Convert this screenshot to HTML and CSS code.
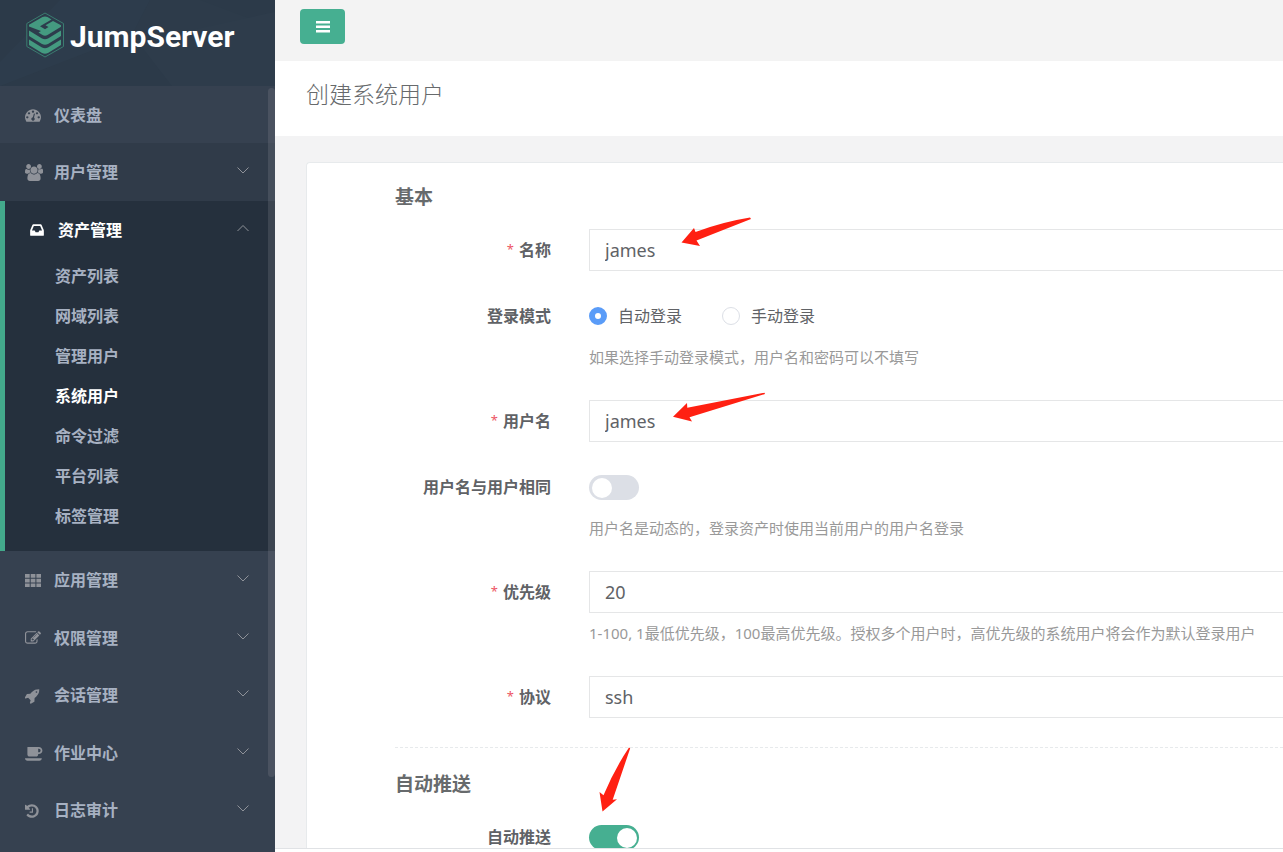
FILE: index.html
```html
<!DOCTYPE html>
<html lang="zh-CN">
<head>
<meta charset="utf-8">
<title>创建系统用户 - JumpServer</title>
<link rel="stylesheet" href="styles.css">
</head>
<body>
<div class="app">
  <aside class="sidebar">
    <a class="brand" href="#">
      <svg class="brand-pattern" viewBox="0 0 275 86" preserveAspectRatio="none" aria-hidden="true">
        <path d="M0 62L60 0H150L132 35L0 86Z" fill="#2f3f4f"/>
        <path d="M132 35L175 86H275V28L200 0H150Z" fill="#2e3d4c"/>
        <path d="M138 42L275 12V86H172Z" fill="#303f4e"/>
      </svg>
      <svg class="brand-mark" viewBox="0 0 38 46" aria-hidden="true">
        <path d="M19 1L37.500 11.500V34.500L19 45L.800 34.500V11.500Z" fill="none" stroke="#3b7c70" stroke-width="1"/>
        <g fill="#449a80">
          <path d="M3 12.800L16.500 5Q19 3.800 21.500 5L25.500 7.500L14 14.200L19 17.200L22.500 15L19.500 13.200L27 9L35 13.200V14.800L21.500 23Q19 24.300 16.500 23L12.500 20.500L15 19L3 14.500Z"/>
          <path d="M3 18.500L16 26.500Q19 28 22 26.500L35 18.500V24L22 32Q19 33.500 16 32L3 24Z"/>
          <path d="M3 27.500L16 35.500Q19 37 22 35.500L35 27.500V33L22 41Q19 42.500 16 41L3 33Z"/>
        </g>
      </svg>
      <span class="brand-name">JumpServer</span>
    </a>
    <nav class="nav">
      <ul class="menu">
        <li class="item"><a class="link" href="#">
          <svg class="icon" viewBox="0 0 1792 1792"><path d="M384 1152q0-53-37.500-90.500t-90.500-37.500-90.500 37.500-37.500 90.500 37.500 90.500 90.500 37.500 90.500-37.500 37.500-90.500zm192-448q0-53-37.500-90.500t-90.500-37.500-90.500 37.500-37.500 90.500 37.500 90.500 90.500 37.500 90.500-37.500 37.500-90.500zm428 481l101-382q6-26-7.500-48.500t-38.500-29.500-48 6.500-30 39.500l-101 382q-60 5-107 43.500t-63 98.500q-20 77 20 146t117 89 146-20 89-117q16-60-6-117t-72-91zm660-33q0-53-37.500-90.500t-90.500-37.500-90.500 37.500-37.500 90.500 37.500 90.500 90.500 37.500 90.500-37.500 37.500-90.500zm-640-640q0-53-37.500-90.500t-90.500-37.500-90.500 37.500-37.500 90.500 37.500 90.500 90.500 37.500 90.500-37.500 37.500-90.500zm448 192q0-53-37.500-90.500t-90.500-37.500-90.500 37.500-37.500 90.500 37.500 90.500 90.500 37.500 90.500-37.500 37.500-90.500zm320 448q0 261-141 483-19 29-54 29h-1402q-35 0-54-29-141-221-141-483 0-182 71-348t191-286 286-191 348-71 348 71 286 191 191 286 71 348z"/></svg>
          <span class="text">仪表盘</span></a></li>
        <li class="item shaded"><a class="link" href="#">
          <svg class="icon wide" viewBox="-64 0 1920 1792"><path d="M529 896q-162 5-265 128h-134q-82 0-138-40.500t-56-118.500q0-353 124-353 6 0 43.500 21t97.500 42.500 119 21.500q67 0 133-23-5 37-5 66 0 159 93 293zm1071 637q0 120-73 189.500t-194 69.500h-874q-121 0-194-69.500t-73-189.500q0-53 3.500-103.500t14-109 26.500-108.500 43-97.500 62-81 85.500-53.500 111.500-20q10 0 43 21.500t73 48 107 48 135 21.500 135-21.500 107-48 73-48 43-21.500q61 0 111.500 20t85.500 53.500 62 81 43 97.500 26.500 108.500 14 109 3.500 103.500zm-1024-1277q0 106-75 181t-181 75-181-75-75-181 75-181 181-75 181 75 75 181zm704 384q0 159-112.500 271.500t-271.500 112.500-271.500-112.500-112.500-271.500 112.500-271.500 271.500-112.500 271.500 112.500 112.500 271.500zm576 225q0 78-56 118.500t-138 40.500h-134q-103-123-265-128 93-134 93-293 0-29-5-66 66 23 133 23 59 0 119-21.500t97.500-42.500 43.500-21q124 0 124 353zm-128-609q0 106-75 181t-181 75-181-75-75-181 75-181 181-75 181 75 75 181z"/></svg>
          <span class="text">用户管理</span>
          <svg class="chevron" viewBox="0 0 12 7"><path d="M.500.500L6 6L11.500.500"/></svg></a></li>
        <li class="item open"><a class="link" href="#">
          <svg class="icon" viewBox="0 0 1536 1792"><path d="M1023 960h316q-1-3-2.500-8t-2.500-8l-212-496h-708l-212 496q-1 3-2.500 8t-2.500 8h316l95 192h320zm513 30v482q0 26-19 45t-45 19h-1408q-26 0-45-19t-19-45v-482q0-62 25-123l238-552q10-25 36.500-42t52.500-17h832q26 0 52.500 17t36.500 42l238 552q25 61 25 123z"/></svg>
          <span class="text">资产管理</span>
          <svg class="chevron" viewBox="0 0 12 7"><path d="M.500 6L6 .500L11.500 6"/></svg></a>
          <ul class="submenu">
            <li><a href="#">资产列表</a></li>
            <li><a href="#">网域列表</a></li>
            <li><a href="#">管理用户</a></li>
            <li><a class="current" href="#">系统用户</a></li>
            <li><a href="#">命令过滤</a></li>
            <li><a href="#">平台列表</a></li>
            <li><a href="#">标签管理</a></li>
          </ul></li>
        <li class="item"><a class="link" href="#">
          <svg class="icon" viewBox="0 0 16 16"><path d="M0 1h4.700v3.700H0zM5.700 1h4.700v3.700H5.700zM11.400 1H16v3.700h-4.600zM0 5.700h4.700v3.700H0zM5.700 5.700h4.700v3.700H5.700zM11.400 5.700H16v3.700h-4.600zM0 10.400h4.700v3.700H0zM5.700 10.400h4.700v3.700H5.700zM11.400 10.400H16v3.700h-4.600z"/></svg>
          <span class="text">应用管理</span>
          <svg class="chevron" viewBox="0 0 12 7"><path d="M.500.500L6 6L11.500.500"/></svg></a></li>
        <li class="item"><a class="link" href="#">
          <svg class="icon" viewBox="0 0 1792 1792"><path d="M888 1184l116-116-152-152-116 116v56h96v96h56zm440-720q-16-16-33 1l-350 350q-17 17-1 33t33-1l350-350q17-17 1-33zm80 594v190q0 119-84.500 203.500t-203.500 84.500h-832q-119 0-203.500-84.500t-84.500-203.500v-832q0-119 84.500-203.500t203.500-84.500h832q63 0 117 25 15 7 18 23 3 17-9 29l-49 49q-14 14-32 8-23-6-45-6h-832q-66 0-113 47t-47 113v832q0 66 47 113t113 47h832q66 0 113-47t47-113v-126q0-13 9-22l64-64q15-15 35-7t20 29zm-96-738l288 288-672 672h-288v-288zm444 132l-92 92-288-288 92-92q28-28 68-28t68 28l152 152q28 28 28 68t-28 68z"/></svg>
          <span class="text">权限管理</span>
          <svg class="chevron" viewBox="0 0 12 7"><path d="M.500.500L6 6L11.500.500"/></svg></a></li>
        <li class="item"><a class="link" href="#">
          <svg class="icon" viewBox="64 0 1792 1792"><path d="M1440 448q0-40-28-68t-68-28-68 28-28 68 28 68 68 28 68-28 28-68zm224-288q0 249-75.500 430.500t-253.500 360.500q-81 80-195 176l-20 379q-2 16-16 26l-384 224q-7 4-16 4-12 0-23-9l-64-64q-13-14-8-32l85-276-281-281-276 85q-3 1-9 1-14 0-23-9l-64-64q-17-19-5-39l224-384q10-14 26-16l379-20q96-114 176-195 188-187 358-258t431-71q14 0 24 9.500t10 22.500z"/></svg>
          <span class="text">会话管理</span>
          <svg class="chevron" viewBox="0 0 12 7"><path d="M.500.500L6 6L11.500.500"/></svg></a></li>
        <li class="item"><a class="link" href="#">
          <svg class="icon wide" viewBox="0 0 1920 1792"><path d="M1664 576q0-80-56-136t-136-56h-64v384h64q80 0 136-56t56-136zm-1664 832h1792q0 106-75 181t-181 75h-1280q-106 0-181-75t-75-181zm1856-832q0 159-112.500 271.500t-271.500 112.500h-64v32q0 92-66 158t-158 66h-704q-92 0-158-66t-66-158v-736q0-26 19-45t45-19h1152q159 0 271.500 112.500t112.500 271.500z"/></svg>
          <span class="text">作业中心</span>
          <svg class="chevron" viewBox="0 0 12 7"><path d="M.500.500L6 6L11.500.500"/></svg></a></li>
        <li class="item"><a class="link" href="#">
          <svg class="icon" viewBox="128 0 1792 1792"><path d="M1664 896q0 156-61 298t-164 245-245 164-298 61q-172 0-327-72.500t-264-204.500q-7-10-6.500-22.500t8.500-20.500l137-138q10-9 25-9 16 2 23 12 73 95 179 147t225 52q104 0 198.500-40.500t163.500-109.500 109.500-163.500 40.500-198.500-40.500-198.500-109.500-163.500-163.500-109.500-198.500-40.500q-98 0-188 35.500t-160 101.500l137 138q31 30 14 69-17 40-59 40h-448q-26 0-45-19t-19-45v-448q0-42 40-59 39-17 69 14l130 129q107-101 244.500-156.500t284.500-55.500q156 0 298 61t245 164 164 245 61 298zm-640-288v448q0 14-9 23t-23 9h-320q-14 0-23-9t-9-23v-64q0-14 9-23t23-9h224v-352q0-14 9-23t23-9h64q14 0 23 9t9 23z"/></svg>
          <span class="text">日志审计</span>
          <svg class="chevron" viewBox="0 0 12 7"><path d="M.500.500L6 6L11.500.500"/></svg></a></li>
      </ul>
      <span class="scroll-thumb"></span>
    </nav>
  </aside>

  <main class="main">
    <header class="topbar">
      <button class="toggle" type="button" aria-label="菜单">
        <svg viewBox="0 0 14 12" aria-hidden="true"><path d="M0 0h14v2.500H0zM0 4.500h14v2.500H0zM0 9h14v2.500H0z"/></svg>
      </button>
    </header>
    <div class="title-bar"><h1>创建系统用户</h1></div>
    <div class="content">
      <form class="card">
        <h2>基本</h2>
        <div class="row">
          <label class="label required" for="name">名称</label>
          <input class="input" id="name" type="text" value="james">
        </div>
        <div class="row" role="radiogroup" aria-labelledby="mode">
          <span class="label" id="mode">登录模式</span>
          <div class="control">
            <label class="choice"><input type="radio" name="mode" checked>自动登录</label>
            <label class="choice"><input type="radio" name="mode">手动登录</label>
          </div>
          <p class="hint">如果选择手动登录模式，用户名和密码可以不填写</p>
        </div>
        <div class="row">
          <label class="label required" for="username">用户名</label>
          <input class="input" id="username" type="text" value="james">
        </div>
        <div class="row">
          <label class="label" for="same">用户名与用户相同</label>
          <div class="control"><input class="switch" id="same" type="checkbox" role="switch"></div>
          <p class="hint">用户名是动态的，登录资产时使用当前用户的用户名登录</p>
        </div>
        <div class="row">
          <label class="label required" for="priority">优先级</label>
          <input class="input" id="priority" type="text" value="20">
          <p class="hint">1-100, 1最低优先级，100最高优先级。授权多个用户时，高优先级的系统用户将会作为默认登录用户</p>
        </div>
        <div class="row">
          <label class="label required" for="protocol">协议</label>
          <input class="input" id="protocol" type="text" value="ssh">
        </div>
        <hr class="divider">
        <h2>自动推送</h2>
        <div class="row">
          <label class="label" for="push">自动推送</label>
          <div class="control"><input class="switch" id="push" type="checkbox" role="switch" checked></div>
        </div>
      </form>
    </div>
    <footer class="footer"></footer>
    <svg class="arrows" width="1008" height="852" viewBox="275 0 1008 852" aria-hidden="true">
      <path d="M681.500 242.500L694 228L695.500 232Q722 222 750 217.500L751 219L696.500 240.500L700 246Z"/>
      <path d="M673 416.700L687 403L687.300 407.700L764.500 392.700L765 394L689.500 417.300L692 421.500Z"/>
      <path d="M602.500 811.500L599.500 792L603.500 795.300Q614 770 629 747.500L630.200 748.300L612.700 799.700L617 799.300Z"/>
    </svg>
  </main>
</div>
</body>
</html>
```
FILE: styles.css
```css
* {
  box-sizing: border-box;
}

body {
  margin: 0;
  font-family: "Noto Sans", "Noto Sans CJK SC", sans-serif;
  font-size: 16px;
  color: #606266;
}

h1, h2, p, ul {
  margin: 0;
  padding: 0;
}

ul {
  list-style: none;
}

a {
  color: inherit;
  text-decoration: none;
}

.app {
  display: flex;
  height: 100vh;
  overflow: hidden;
}

/* Sidebar */
.sidebar {
  flex: 0 0 275px;
  display: flex;
  flex-direction: column;
  background: #364150;
}

.brand {
  flex: none;
  position: relative;
  display: flex;
  align-items: center;
  gap: 6px;
  height: 86px;
  padding: 0 0 16px 26px;
  background: #2c3a49;
  overflow: hidden;
}

.brand-pattern {
  position: absolute;
  inset: 0;
  width: 100%;
  height: 100%;
  opacity: 0.5;
}

.brand-mark {
  position: relative;
  width: 38px;
  height: 46px;
}

.brand-name {
  position: relative;
  padding-top: 4px;
  font-family: Roboto, sans-serif;
  font-size: 30px;
  font-weight: 700;
  line-height: 40px;
  color: #fff;
}

.nav {
  position: relative;
  flex: 1;
  min-height: 0;
  overflow: hidden;
}

.link {
  display: flex;
  align-items: center;
  height: 57px;
  padding: 0 26px 2px 25px;
  color: #a7b1c2;
  font-weight: 600;
}

.item:nth-child(even) .link {
  height: 58px;
}

.icon {
  flex: none;
  width: 16px;
  height: 16px;
  margin: 3px 13px 0 0;
  fill: #8f9299;
}

.icon.wide {
  width: 18px;
  height: 17px;
  margin-right: 11px;
}

.text {
  flex: 1;
}

.chevron {
  width: 12px;
  height: 7px;
  margin-bottom: 1px;
  fill: none;
  stroke: #8f9299;
}

.shaded {
  background: #303b49;
}

.open {
  padding-bottom: 15px;
  border-left: 5px solid #43a98b;
  background: #25303d;
}

.open .link {
  height: 55px;
  padding-top: 2px;
  color: #fff;
}

.open .icon {
  width: 14px;
  margin-right: 14px;
  fill: #fff;
}

.submenu a {
  display: block;
  padding-left: 50px;
  line-height: 40px;
  color: #a7b1c2;
  font-weight: 600;
}

.submenu .current {
  color: #fff;
}

.scroll-thumb {
  position: absolute;
  top: 2px;
  right: 0;
  width: 7px;
  height: 90%;
  border-radius: 4px;
  background: rgba(144, 147, 153, 0.22);
}

/* Main column */
.main {
  position: relative;
  flex: 1;
  min-width: 0;
  display: flex;
  flex-direction: column;
  background: #f3f3f4;
}

.topbar {
  flex: none;
  display: flex;
  height: 61px;
  padding: 9px 25px;
  background: #f3f3f3;
}

.toggle {
  display: flex;
  align-items: center;
  justify-content: center;
  width: 45px;
  height: 35px;
  padding: 0;
  border: 0;
  border-radius: 4px;
  background: #46af91;
}

.toggle svg {
  width: 14px;
  height: 12px;
  fill: #fff;
}

.title-bar {
  flex: none;
  height: 75px;
  padding: 15px 31px;
  background: #fff;
}

h1 {
  font-size: 23px;
  font-weight: 300;
  line-height: 36px;
  color: #676a6c;
}

.content {
  flex: 1;
  min-height: 0;
  padding: 26px 0 0 31px;
  overflow: hidden;
}

.footer {
  flex: none;
  height: 4px;
  border-top: 1px solid #e0e2e5;
  background: #fff;
}

/* Form */
.card {
  padding: 15px 0 24px 88px;
  border: 1px solid #e7eaec;
  border-right: 0;
  border-radius: 4px 0 0 4px;
  background: #fff;
}

h2 {
  margin-bottom: 13px;
  font-size: 19px;
  font-weight: 700;
  line-height: 38px;
  color: #676a6c;
}

.row {
  display: grid;
  grid-template-columns: 156px 1fr;
  column-gap: 38px;
  margin-bottom: 24px;
}

.label {
  line-height: 42px;
  text-align: right;
  font-weight: 600;
  white-space: nowrap;
}

.required::before {
  content: "*";
  margin-right: 5px;
  font-size: 13px;
  font-weight: 400;
  line-height: 1;
  vertical-align: 2px;
  color: #ed5565;
}

.input {
  width: 100%;
  height: 42px;
  padding: 0 15px;
  border: 1px solid #e5e6e7;
  border-right: 0;
  border-radius: 1px 0 0 1px;
  background: #fff;
  font: inherit;
  font-size: 18px;
  color: #606266;
}

.control {
  display: flex;
  align-items: center;
  gap: 40px;
  height: 42px;
}

.choice {
  display: flex;
  align-items: center;
  gap: 11px;
  padding-bottom: 2px;
}

.choice input {
  appearance: none;
  width: 18px;
  height: 18px;
  margin: 2px 0 0;
  border: 1px solid #dcdfe6;
  border-radius: 50%;
  background: #fff;
}

.choice input:checked {
  border: 6px solid #5a9cf8;
}

.hint {
  grid-column: 2;
  margin: 9px 0 8px;
  font-size: 15px;
  line-height: 22px;
  white-space: nowrap;
  color: #999;
}

.switch {
  appearance: none;
  display: flex;
  width: 50px;
  height: 25px;
  margin: 0;
  padding: 3px;
  border-radius: 13px;
  background: #dcdfe6;
}

.switch::before {
  content: "";
  width: 20px;
  height: 20px;
  border-radius: 50%;
  background: #fff;
}

.switch:checked {
  justify-content: flex-end;
  padding-right: 2px;
  background: #46af91;
}

.divider {
  height: 0;
  margin: 29px 0 17px;
  border: 0;
  border-top: 1px dashed #e7eaec;
}

/* Annotations drawn over the form */
.arrows {
  position: absolute;
  top: 0;
  left: 0;
  fill: #ff2012;
  pointer-events: none;
}
```
